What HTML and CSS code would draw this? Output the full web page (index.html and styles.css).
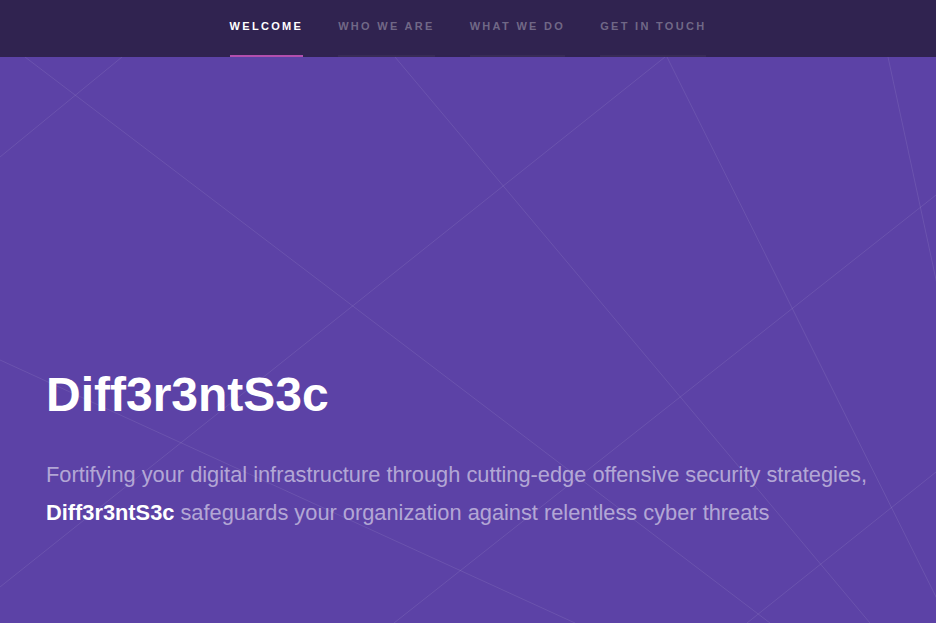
FILE: index.html
```html
<!DOCTYPE html>
<html lang="en">
<head>
<meta charset="utf-8">
<title>Diff3r3ntS3c</title>
<link rel="stylesheet" href="styles.css">
</head>
<body>
<header class="nav">
  <nav class="nav-list">
    <a class="nav-item active" href="#">WELCOME</a>
    <a class="nav-item" href="#">WHO WE ARE</a>
    <a class="nav-item" href="#">WHAT WE DO</a>
    <a class="nav-item" href="#">GET IN TOUCH</a>
  </nav>
</header>
<main class="hero">
  <svg class="hero-lines" viewBox="0 0 936 566" preserveAspectRatio="none" aria-hidden="true">
    <g stroke="rgba(255,255,255,0.09)" stroke-width="1" fill="none">
      <line x1="25" y1="0" x2="770" y2="566"/>
      <line x1="122" y1="0" x2="0" y2="100"/>
      <line x1="665" y1="0" x2="0" y2="530"/>
      <line x1="667" y1="0" x2="949" y2="566"/>
      <line x1="395" y1="0" x2="870" y2="566"/>
      <line x1="888" y1="0" x2="1010" y2="566"/>
      <line x1="936" y1="138" x2="394" y2="566"/>
      <line x1="936" y1="415" x2="747" y2="566"/>
      <line x1="0" y1="303" x2="575" y2="566"/>
    </g>
  </svg>
  <div class="hero-content">
    <h1 class="hero-title">Diff3r3ntS3c</h1>
    <p class="hero-text">Fortifying your digital infrastructure through cutting-edge offensive security strategies, <strong class="hero-brand">Diff3r3ntS3c</strong> safeguards your organization against relentless cyber threats</p>
  </div>
</main>
</body>
</html>
```
FILE: styles.css
```css
html, body {
  margin: 0;
  padding: 0;
}
body {
  font-family: "Liberation Sans", Arial, sans-serif;
  background: #5c42a6;
  overflow: hidden;
  height: 623px;
}
.nav {
  background: #302350;
  height: 57px;
  display: flex;
  justify-content: center;
}
.nav-list {
  display: flex;
  gap: 35px;
  height: 100%;
}
.nav-item {
  display: flex;
  align-items: center;
  box-sizing: border-box;
  padding-bottom: 3px;
  height: 100%;
  font-size: 11px;
  font-weight: 700;
  letter-spacing: 2.3px;
  color: rgba(255,255,255,0.33);
  text-decoration: none;
  border-bottom: 2px solid rgba(255,255,255,0.04);
}
.nav-item.active {
  color: #ffffff;
  border-bottom-color: #b24fae;
}
.hero {
  position: relative;
  height: 566px;
  overflow: hidden;
}
.hero-lines {
  position: absolute;
  inset: 0;
  width: 100%;
  height: 100%;
}
.hero-content {
  position: relative;
  padding: 312px 46px 0 46px;
}
.hero-title {
  margin: 0;
  font-size: 48px;
  line-height: 1.1;
  font-weight: 700;
  color: #ffffff;
}
.hero-text {
  margin: 34px 0 0 0;
  font-size: 21.8px;
  line-height: 38.5px;
  color: rgba(255,255,255,0.55);
}
.hero-brand {
  color: #ffffff;
  font-weight: 700;
}
```
